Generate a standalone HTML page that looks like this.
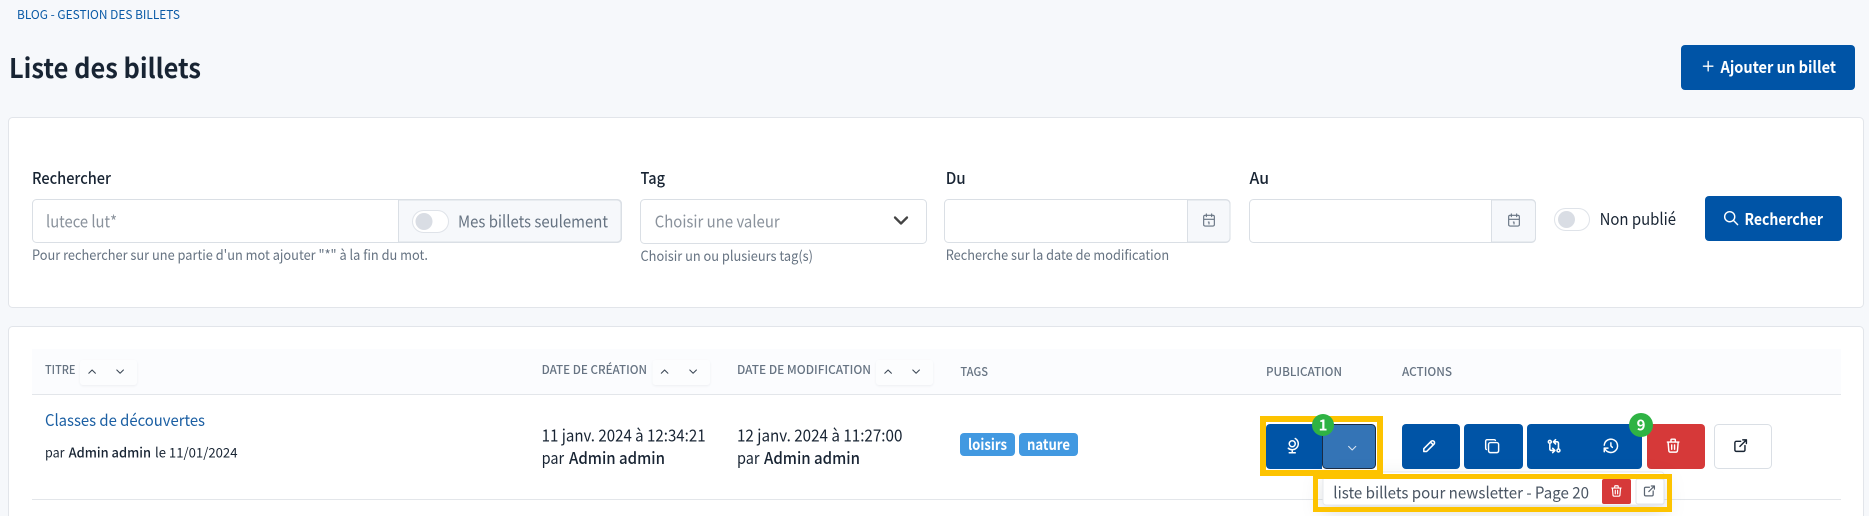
<!DOCTYPE html>
<html lang="fr">
<head>
<meta charset="utf-8">
<title>Liste des billets</title>
<style>
html,body{margin:0;padding:0;background:#f6f8fb;width:1869px;height:516px;overflow:hidden}
svg{display:block}
text{font-family:"Noto Sans CJK JP","Liberation Sans",sans-serif;fill:#182433;font-size:16px}
.i{fill:none;stroke-linecap:round;stroke-linejoin:round}
.b{font-weight:500}
.h{font-size:12px;font-weight:500;fill:#667382}
.m{fill:#667382;font-size:14px}
.p{fill:#8a929c;font-size:16.5px}
.w{fill:#fff;font-weight:700}
</style>
</head>
<body>
<svg xmlns="http://www.w3.org/2000/svg" width="1869" height="516" viewBox="0 0 1869 516">
<defs>
<g id="cal"><path d="M4 7a2 2 0 0 1 2-2h12a2 2 0 0 1 2 2v12a2 2 0 0 1-2 2H6a2 2 0 0 1-2-2zM16 3v4M8 3v4M4 11h16M11 15h1M12 15v3"/></g>
<g id="up"><path d="M6 15l6-6 6 6"/></g>
<g id="dn"><path d="M6 9l6 6 6-6"/></g>
<g id="tr"><path d="M4 7h16M10 11v6M14 11v6M5 7l1 12a2 2 0 0 0 2 2h8a2 2 0 0 0 2-2l1-12M9 7V4a1 1 0 0 1 1-1h4a1 1 0 0 1 1 1v3"/></g>
<g id="ex"><path d="M12 6H6a2 2 0 0 0-2 2v10a2 2 0 0 0 2 2h10a2 2 0 0 0 2-2v-6M11 13l9-9M15 4h5v5"/></g>
</defs>

<rect width="1869" height="516" fill="#f6f8fb"/>

<!-- header -->
<text x="17" y="19" textLength="163" lengthAdjust="spacingAndGlyphs" style="font-size:12px;fill:#0a5aa6">BLOG - GESTION DES BILLETS</text>
<text x="9" y="78" textLength="192" lengthAdjust="spacingAndGlyphs" style="font-size:27px;font-weight:700">Liste des billets</text>
<rect x="1681" y="45" width="174" height="45" rx="4" fill="#0054a6"/>
<g class="i" stroke="#fff" stroke-width="2" transform="translate(1700 58) scale(.68)"><path d="M12 5v14M5 12h14"/></g>
<text class="w" x="1720.5" y="73" textLength="115.5" lengthAdjust="spacingAndGlyphs">Ajouter un billet</text>

<!-- search card -->
<rect x="8.500" y="117.500" width="1855" height="190" rx="4" fill="#fff" stroke="#e2e5ea"/>
<text class="b" x="32" y="184" textLength="79" lengthAdjust="spacingAndGlyphs">Rechercher</text>
<rect x="32.500" y="199.500" width="589" height="43" rx="4" fill="#fff" stroke="#dadfe5"/>
<path d="M398.500 200H617a4 4 0 0 1 4 4v34a4 4 0 0 1-4 4H398.500z" fill="#f6f8fb" stroke="#dadfe5"/>
<text class="p" x="46" y="227.500" textLength="71" lengthAdjust="spacingAndGlyphs">lutece lut*</text>
<rect x="412.500" y="210.500" width="36" height="22" rx="11" fill="#fff" stroke="#dfe3e9"/>
<circle cx="424" cy="221.500" r="8.500" fill="#d9dde4"/>
<text x="458" y="227.500" textLength="150" lengthAdjust="spacingAndGlyphs" style="fill:#667382;font-size:16.500px">Mes billets seulement</text>
<text class="m" x="32" y="260" textLength="396" lengthAdjust="spacingAndGlyphs">Pour rechercher sur une partie d'un mot ajouter "*" à la fin du mot.</text>

<text class="b" x="640.500" y="184" textLength="24.500" lengthAdjust="spacingAndGlyphs">Tag</text>
<rect x="640.500" y="199.500" width="286" height="44" rx="4" fill="#fff" stroke="#dadfe5"/>
<text class="p" x="654.700" y="227.500" textLength="125" lengthAdjust="spacingAndGlyphs">Choisir une valeur</text>
<g class="i" stroke="#444" stroke-width="2.300" transform="translate(889 208.500) scale(1)"><use href="#dn"/></g>
<text class="m" x="640.500" y="261" textLength="172.500" lengthAdjust="spacingAndGlyphs">Choisir un ou plusieurs tag(s)</text>

<text class="b" x="945.700" y="184" textLength="20" lengthAdjust="spacingAndGlyphs">Du</text>
<rect x="944.500" y="199.500" width="285.500" height="43" rx="4" fill="#fff" stroke="#dadfe5"/>
<path d="M1187.500 200H1226a4 4 0 0 1 4 4v34a4 4 0 0 1-4 4h-38.500z" fill="#f6f8fb" stroke="#dadfe5"/>
<g class="i" stroke="#667382" stroke-width="1.700" transform="translate(1201 212) scale(.667)"><use href="#cal"/></g>
<text class="m" x="945.700" y="260" textLength="223.500" lengthAdjust="spacingAndGlyphs">Recherche sur la date de modification</text>

<text class="b" x="1249.500" y="184" textLength="19.500" lengthAdjust="spacingAndGlyphs">Au</text>
<rect x="1249.500" y="199.500" width="286" height="43" rx="4" fill="#fff" stroke="#dadfe5"/>
<path d="M1491.500 200H1531.500a4 4 0 0 1 4 4v34a4 4 0 0 1-4 4h-40z" fill="#f6f8fb" stroke="#dadfe5"/>
<g class="i" stroke="#667382" stroke-width="1.700" transform="translate(1506 212) scale(.667)"><use href="#cal"/></g>

<rect x="1554.500" y="208.500" width="35" height="22" rx="11" fill="#fff" stroke="#dfe3e9"/>
<circle cx="1566.500" cy="219.500" r="8.500" fill="#d9dde4"/>
<text x="1599.600" y="225" textLength="76.400" lengthAdjust="spacingAndGlyphs" style="font-size:16.500px">Non publié</text>
<rect x="1705" y="196" width="137" height="45" rx="4" fill="#0054a6"/>
<g class="i" stroke="#fff" stroke-width="2" transform="translate(1722.500 209.500) scale(.72)"><path d="M3 10a7 7 0 1 0 14 0 7 7 0 1 0-14 0M21 21l-6-6"/></g>
<text class="w" x="1744.500" y="225" textLength="78.500" lengthAdjust="spacingAndGlyphs">Rechercher</text>

<!-- table card -->
<rect x="8.500" y="326.500" width="1855" height="202" rx="4" fill="#fff" stroke="#e2e5ea"/>
<rect x="32" y="349" width="1809" height="45" fill="#fbfcfe"/>
<rect x="32" y="394" width="1809" height="1" fill="#e3e6ea"/>
<rect x="32" y="499" width="1809" height="1" fill="#e3e6ea"/>

<text class="h" x="45" y="374" textLength="30.500" lengthAdjust="spacingAndGlyphs">TITRE</text>
<rect x="80" y="360" width="57" height="25" rx="3" fill="#fcfdfe" style="filter:drop-shadow(0 1px 1px rgba(24,36,51,.06))"/>
<g class="i" stroke="#3a4654" stroke-width="1.900"><use href="#up" transform="translate(85.500 365) scale(.55)"/><use href="#dn" transform="translate(113.500 365) scale(.55)"/></g>

<text class="h" x="541.600" y="374" textLength="105.400" lengthAdjust="spacingAndGlyphs">DATE DE CRÉATION</text>
<rect x="652.600" y="360" width="57.400" height="25" rx="3" fill="#fcfdfe" style="filter:drop-shadow(0 1px 1px rgba(24,36,51,.06))"/>
<g class="i" stroke="#3a4654" stroke-width="1.900"><use href="#up" transform="translate(658 365) scale(.55)"/><use href="#dn" transform="translate(686.500 365) scale(.55)"/></g>

<text class="h" x="737" y="374" textLength="134" lengthAdjust="spacingAndGlyphs">DATE DE MODIFICATION</text>
<rect x="876" y="360" width="57" height="25" rx="3" fill="#fcfdfe" style="filter:drop-shadow(0 1px 1px rgba(24,36,51,.06))"/>
<g class="i" stroke="#3a4654" stroke-width="1.900"><use href="#up" transform="translate(881.500 365) scale(.55)"/><use href="#dn" transform="translate(909.500 365) scale(.55)"/></g>

<text class="h" x="960.400" y="376" textLength="27.600" lengthAdjust="spacingAndGlyphs">TAGS</text>
<text class="h" x="1266" y="376" textLength="76" lengthAdjust="spacingAndGlyphs">PUBLICATION</text>
<text class="h" x="1402" y="376" textLength="50" lengthAdjust="spacingAndGlyphs">ACTIONS</text>

<!-- row -->
<text x="45" y="426" textLength="160" lengthAdjust="spacingAndGlyphs" style="fill:#1b5fa3;font-size:16px">Classes de découvertes</text>
<text x="45" y="457.500" textLength="19.500" lengthAdjust="spacingAndGlyphs" style="font-size:13.500px">par</text>
<text class="b" x="68.600" y="457.500" textLength="82.400" lengthAdjust="spacingAndGlyphs" style="font-size:13.500px">Admin admin</text>
<text x="155" y="457.500" textLength="82.500" lengthAdjust="spacingAndGlyphs" style="font-size:13.500px">le 11/01/2024</text>

<text x="541.600" y="441.500" textLength="164" lengthAdjust="spacingAndGlyphs" style="font-size:16.500px">11 janv. 2024 à 12:34:21</text>
<text x="541.600" y="464" textLength="22.500" lengthAdjust="spacingAndGlyphs" style="font-size:16.500px">par</text>
<text class="b" x="569" y="464" textLength="96" lengthAdjust="spacingAndGlyphs" style="font-size:16.500px">Admin admin</text>
<text x="737" y="441.500" textLength="165.400" lengthAdjust="spacingAndGlyphs" style="font-size:16.500px">12 janv. 2024 à 11:27:00</text>
<text x="737" y="464" textLength="22.500" lengthAdjust="spacingAndGlyphs" style="font-size:16.500px">par</text>
<text class="b" x="764" y="464" textLength="96" lengthAdjust="spacingAndGlyphs" style="font-size:16.500px">Admin admin</text>

<rect x="960" y="433" width="55" height="23" rx="4" fill="#4299e1"/>
<text class="w" x="968" y="450" textLength="39" lengthAdjust="spacingAndGlyphs" style="font-size:15px">loisirs</text>
<rect x="1019" y="433" width="59" height="23" rx="4" fill="#4299e1"/>
<text class="w" x="1027" y="450" textLength="43" lengthAdjust="spacingAndGlyphs" style="font-size:15px">nature</text>

<!-- publication -->
<path d="M1322 424h-52a4 4 0 0 0-4 4v37a4 4 0 0 0 4 4h52z" fill="#0054a6"/>
<rect x="1322.500" y="424.500" width="53" height="44" rx="4" fill="#3474b6" stroke="#1b2c45"/>
<g class="i" stroke="#fff" stroke-width="2" transform="translate(1284 437) scale(.75)"><path d="M7 9a4 4 0 1 0 8 0 4 4 0 0 0-8 0M5.750 15a8.015 8.015 0 1 0 9.250-13M11 17v4M7 21h8"/></g>
<g class="i" stroke="#dbe6f2" stroke-width="1.700" transform="translate(1345 441) scale(.6)"><use href="#dn"/></g>

<!-- actions -->
<rect x="1402" y="424" width="58" height="45" rx="4" fill="#0054a6"/>
<g class="i" stroke="#fff" stroke-width="2.200" transform="translate(1421 437.500) scale(.7)"><path d="M4 20h4L18.500 9.500a2.828 2.828 0 1 0-4-4L4 16v4M13.500 6.500l4 4"/></g>
<rect x="1464" y="424" width="59" height="45" rx="4" fill="#0054a6"/>
<g class="i" stroke="#fff" stroke-width="2" transform="translate(1483.500 437.500) scale(.72)"><path d="M7 9.667A2.667 2.667 0 0 1 9.667 7h8.666A2.667 2.667 0 0 1 21 9.667v8.666A2.667 2.667 0 0 1 18.333 21H9.667A2.667 2.667 0 0 1 7 18.333zM4.012 16.737A2.005 2.005 0 0 1 3 15V5c0-1.100.9-2 2-2h10c.75 0 1.158.385 1.500 1"/></g>
<rect x="1527" y="424" width="115" height="45" rx="4" fill="#0054a6"/>
<g class="i" stroke="#fff" stroke-width="2.200" transform="translate(1545.500 437.500) scale(.72)"><path d="M4 6a2 2 0 1 0 4 0 2 2 0 1 0-4 0M16 18a2 2 0 1 0 4 0 2 2 0 1 0-4 0M11 6h5a2 2 0 0 1 2 2v8M14 9l-3-3 3-3M13 18H8a2 2 0 0 1-2-2V8M10 15l3 3-3 3"/></g>
<g class="i" stroke="#fff" stroke-width="2" transform="translate(1602 437) scale(.74)"><path d="M12 8v4l2 2M3.050 11a9 9 0 1 1 .5 4m-.5 5v-5h5"/></g>
<rect x="1647" y="424" width="58" height="45" rx="4" fill="#d63939"/>
<g class="i" stroke="#fff" stroke-width="2" transform="translate(1664.500 437) scale(.72)"><use href="#tr"/></g>
<rect x="1714.500" y="424.500" width="57" height="44" rx="4" fill="#fff" stroke="#dadfe5"/>
<g class="i" stroke="#182433" stroke-width="2" transform="translate(1732 437) scale(.72)"><use href="#ex"/></g>

<!-- dropdown -->
<rect x="1323" y="472" width="341" height="33" rx="3" fill="#fff" stroke="#e6e8ec" stroke-width="1" style="filter:drop-shadow(0 8px 10px rgba(24,36,51,.14))"/>
<text x="1333.300" y="498.500" textLength="255.700" lengthAdjust="spacingAndGlyphs" style="fill:#4a5563;font-size:16px">liste billets pour newsletter - Page 20</text>
<rect x="1602" y="479" width="29" height="25" rx="2" fill="#d63939"/>
<g class="i" stroke="#fff" stroke-width="2" transform="translate(1609.500 484) scale(.58)"><use href="#tr"/></g>
<rect x="1636" y="479" width="28" height="25" rx="2" fill="#fff" stroke="#e1e4e9"/>
<g class="i" stroke="#5b6572" stroke-width="2" transform="translate(1642 483.500) scale(.62)"><use href="#ex"/></g>

<!-- highlights -->
<rect x="1263" y="419" width="117" height="54" fill="none" stroke="#fdc300" stroke-width="6"/>
<path d="M1315.500 476.500h354v33h-354z" fill="none" stroke="#fdc300" stroke-width="5"/>

<!-- badges -->
<circle cx="1323" cy="425" r="11" fill="#2fb344"/>
<text class="w" x="1323" y="430.500" text-anchor="middle" style="font-size:15px">1</text>
<circle cx="1641" cy="425" r="12" fill="#2fb344"/>
<text class="w" x="1641" y="430.500" text-anchor="middle" style="font-size:15px">9</text>
</svg>
</body>
</html>
